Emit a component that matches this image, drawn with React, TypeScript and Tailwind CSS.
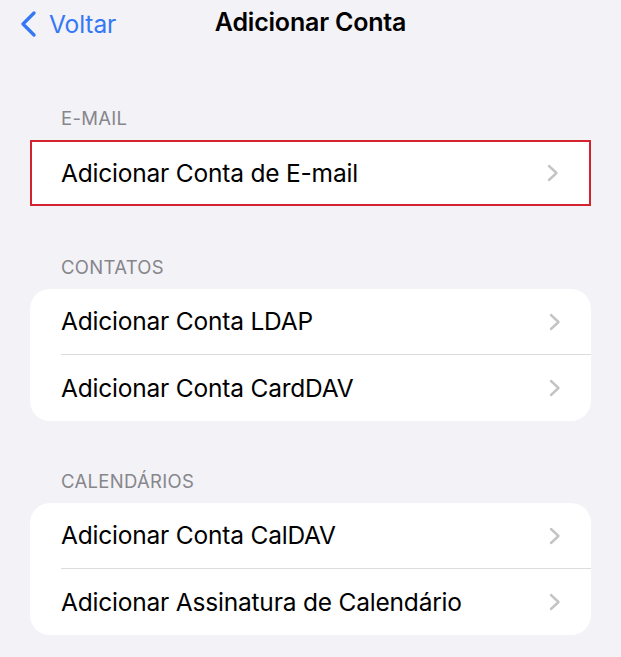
const font = { fontFamily: 'Inter, "Noto Sans", "Liberation Sans", sans-serif' };

export default function App() {
  return (
    <main
      className="min-h-[657px] w-full bg-[#f2f2f7] pb-6 text-black antialiased"
      style={font}
    >
      {/* Nav bar */}
      <header className="relative flex h-[46px] items-center">
        <button className="absolute left-[20px] top-[11px] flex items-center gap-[12px] text-[#3478f6]">
          <BackChevron />
          <span className="text-[24.5px] leading-none tracking-[-0.1px]">Voltar</span>
        </button>
        <h1 className="w-full text-center text-[25px] font-semibold tracking-[-0.2px]">
          Adicionar Conta
        </h1>
      </header>

      <SectionHeader className="mt-[61px]">E-MAIL</SectionHeader>
      <div className="mx-[30px] border-2 border-[#d4222e] bg-white">
        <Row label="Adicionar Conta de E-mail" height="h-[62px]" inset="pl-[29px]" />
      </div>

      <SectionHeader className="mt-[50px]">CONTATOS</SectionHeader>
      <Card>
        <Row label="Adicionar Conta LDAP" divider />
        <Row label="Adicionar Conta CardDAV" />
      </Card>

      <SectionHeader className="mt-[49px]">CALENDÁRIOS</SectionHeader>
      <Card>
        <Row label="Adicionar Conta CalDAV" divider />
        <Row label="Adicionar Assinatura de Calendário" />
      </Card>
    </main>
  );
}

function SectionHeader({ children, className }: { children: string; className?: string }) {
  return (
    <div
      className={`mb-[11px] pl-[61px] text-[18.5px] leading-[22px] tracking-[0.3px] text-[#86868b] ${className ?? ''}`}
    >
      {children}
    </div>
  );
}

function Card({ children }: { children: React.ReactNode }) {
  return <div className="mx-[30px] overflow-hidden rounded-[20px] bg-white">{children}</div>;
}

function Row({
  label,
  divider,
  height = 'h-[66px]',
  inset = 'pl-[31px]',
}: {
  label: string;
  divider?: boolean;
  height?: string;
  inset?: string;
}) {
  return (
    <div className={`flex items-stretch ${inset} ${height}`}>
      <div
        className={`flex flex-1 items-center justify-between pr-[30px] ${
          divider ? 'border-b border-[#dcdce0]' : ''
        }`}
      >
        <span className="text-[24.5px] tracking-[-0.2px]">{label}</span>
        <ForwardChevron />
      </div>
    </div>
  );
}

function BackChevron() {
  return (
    <svg width="17" height="26" viewBox="0 0 17 26" aria-hidden>
      <path
        d="M14 2 L3 13 L14 24"
        fill="none"
        stroke="currentColor"
        strokeWidth="3.2"
        strokeLinecap="round"
        strokeLinejoin="round"
      />
    </svg>
  );
}

function ForwardChevron() {
  return (
    <svg width="12" height="18" viewBox="0 0 12 18" aria-hidden>
      <path
        d="M2 2 L9.5 9 L2 16"
        fill="none"
        stroke="#c4c4c7"
        strokeWidth="2.4"
        strokeLinecap="round"
        strokeLinejoin="round"
      />
    </svg>
  );
}
